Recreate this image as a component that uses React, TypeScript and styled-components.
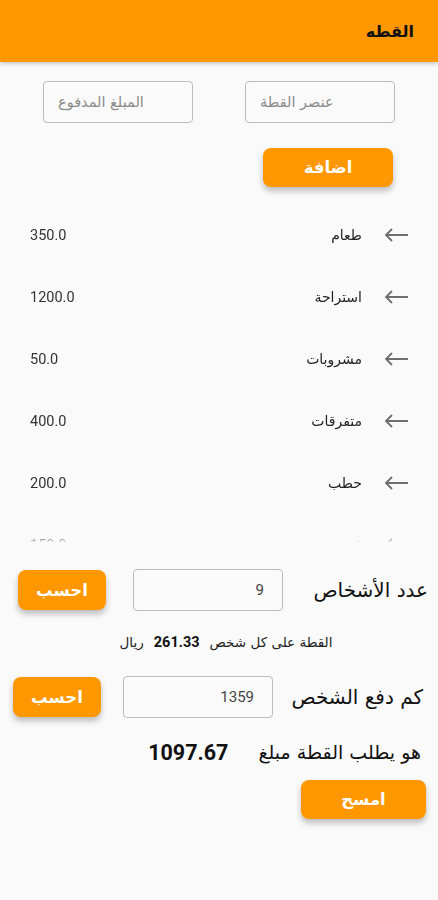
import React from "react";
import styled, { createGlobalStyle } from "styled-components";

const GlobalStyle = createGlobalStyle`
  * { box-sizing: border-box; }
  html, body { margin: 0; padding: 0; background: #fafafa; }
  body { font-family: Roboto, "DejaVu Sans", sans-serif; }
`;

const Page = styled.div`
  width: 438px;
  min-height: 900px;
  background: #fafafa;
  direction: rtl;
  display: flex;
  flex-direction: column;
`;

const Header = styled.header`
  height: 62px;
  background: #ff9800;
  display: flex;
  align-items: center;
  padding: 0 24px;
  box-shadow: 0 2px 4px rgba(0, 0, 0, 0.2);
`;

const Title = styled.h1`
  margin: 0;
  font-family: "DejaVu Sans", sans-serif;
  font-size: 16px;
  font-weight: bold;
  color: #111;
`;

const InputsRow = styled.div`
  display: flex;
  justify-content: center;
  gap: 52px;
  margin-top: 19px;
`;

const Field = styled.div`
  width: 150px;
  height: 42px;
  border: 1px solid #bdbdbd;
  border-radius: 4px;
  display: flex;
  align-items: center;
  padding: 0 14px;
  font-family: "DejaVu Sans", sans-serif;
  font-size: 14.5px;
  color: #8a8a8a;
  justify-content: flex-end;
  flex-shrink: 0;
`;

const OrangeButton = styled.button<{ $w: number; $h?: number }>`
  width: ${(p) => p.$w}px;
  height: ${(p) => p.$h ?? 39}px;
  border: none;
  border-radius: 8px;
  background: #ff9800;
  color: #fff;
  font-family: "DejaVu Sans", sans-serif;
  font-weight: bold;
  font-size: 16.5px;
  box-shadow: 0 4px 6px rgba(0, 0, 0, 0.25);
  flex-shrink: 0;
  padding: 0;
`;

const AddWrap = styled.div`
  display: flex;
  padding-right: 45px;
  margin-top: 25px;
`;

const List = styled.div`
  margin-top: 17px;
  height: 338px;
  overflow: hidden;
  display: flex;
  flex-direction: column;
  -webkit-mask-image: linear-gradient(to bottom, #000 calc(100% - 8px), rgba(0, 0, 0, 0.15) 100%);
  mask-image: linear-gradient(to bottom, #000 calc(100% - 8px), rgba(0, 0, 0, 0.15) 100%);
`;

const ListRow = styled.div`
  height: 62px;
  flex-shrink: 0;
  display: flex;
  align-items: center;
  padding: 0 30px;
  gap: 22px;
`;

const ItemName = styled.span`
  font-family: "DejaVu Sans", sans-serif;
  font-size: 14px;
  color: #222;
`;

const Amount = styled.span`
  margin-right: auto;
  font-size: 14.5px;
  color: #333;
  direction: ltr;
`;

const CalcRow = styled.div<{ $pl: number; $pr: number; $gap: number; $mt: number }>`
  display: flex;
  align-items: center;
  margin-top: ${(p) => p.$mt}px;
  padding-left: ${(p) => p.$pl}px;
  padding-right: ${(p) => p.$pr}px;
  gap: ${(p) => p.$gap}px;
`;

const BigLabel = styled.span`
  flex: 1;
  min-width: 0;
  font-family: "DejaVu Sans", sans-serif;
  font-size: 20px;
  color: #111;
  white-space: nowrap;
`;

const NumField = styled(Field)`
  direction: ltr;
  justify-content: flex-end;
  font-family: Roboto, sans-serif;
  color: #444;
  font-size: 15px;
  padding: 0 18px;
`;

const Summary = styled.div`
  margin-top: 22px;
  display: flex;
  justify-content: center;
  align-items: center;
  gap: 6px;
  padding-left: 14px;
  font-family: "DejaVu Sans", sans-serif;
  font-size: 13.5px;
  color: #222;
  height: 18px;
`;

const SummaryNum = styled.span`
  font-family: Roboto, sans-serif;
  font-weight: bold;
  font-size: 14.5px;
  color: #111;
  margin: 0 4px;
`;

const ResultRow = styled.div`
  margin-top: 22px;
  display: flex;
  align-items: center;
  padding-right: 17px;
  gap: 30px;
  height: 24px;
`;

const ResultLabel = styled.span`
  font-family: "DejaVu Sans", sans-serif;
  font-size: 19px;
  color: #111;
`;

const ResultNum = styled.span`
  font-family: Roboto, sans-serif;
  font-size: 21.5px;
  font-weight: bold;
  color: #111;
`;

const ClearWrap = styled.div`
  display: flex;
  padding-right: 12px;
  margin-top: 16px;
`;

const Arrow = () => (
  <svg width="24" height="14" viewBox="0 0 24 14" style={{ flexShrink: 0 }}>
    <path d="M24 7H2M8 1L2 7l6 6" fill="none" stroke="#6f6f6f" strokeWidth="1.8" />
  </svg>
);

const items = [
  { name: "طعام", amount: "350.0" },
  { name: "استراحة", amount: "1200.0" },
  { name: "مشروبات", amount: "50.0" },
  { name: "متفرقات", amount: "400.0" },
  { name: "حطب", amount: "200.0" },
  { name: "فحم", amount: "150.0" },
];

export default function App() {
  return (
    <>
      <GlobalStyle />
      <Page>
        <Header>
          <Title>القطه</Title>
        </Header>
        <InputsRow>
          <Field>عنصر القطة</Field>
          <Field>المبلغ المدفوع</Field>
        </InputsRow>
        <AddWrap>
          <OrangeButton $w={130}>اضافة</OrangeButton>
        </AddWrap>
        <List>
          {items.map((it) => (
            <ListRow key={it.name}>
              <Arrow />
              <ItemName>{it.name}</ItemName>
              <Amount>{it.amount}</Amount>
            </ListRow>
          ))}
        </List>
        <CalcRow $mt={27} $pl={18} $pr={10} $gap={27}>
          <BigLabel>عدد الأشخاص</BigLabel>
          <NumField>9</NumField>
          <OrangeButton $w={88} $h={40}>احسب</OrangeButton>
        </CalcRow>
        <Summary>
          <span>القطة على كل شخص</span>
          <SummaryNum>261.33</SummaryNum>
          <span>ريال</span>
        </Summary>
        <CalcRow $mt={25} $pl={13} $pr={15} $gap={22}>
          <BigLabel>كم دفع الشخص</BigLabel>
          <NumField>1359</NumField>
          <OrangeButton $w={88} $h={40}>احسب</OrangeButton>
        </CalcRow>
        <ResultRow>
          <ResultLabel>هو يطلب القطة مبلغ</ResultLabel>
          <ResultNum>1097.67</ResultNum>
        </ResultRow>
        <ClearWrap>
          <OrangeButton $w={125}>امسح</OrangeButton>
        </ClearWrap>
      </Page>
    </>
  );
}
